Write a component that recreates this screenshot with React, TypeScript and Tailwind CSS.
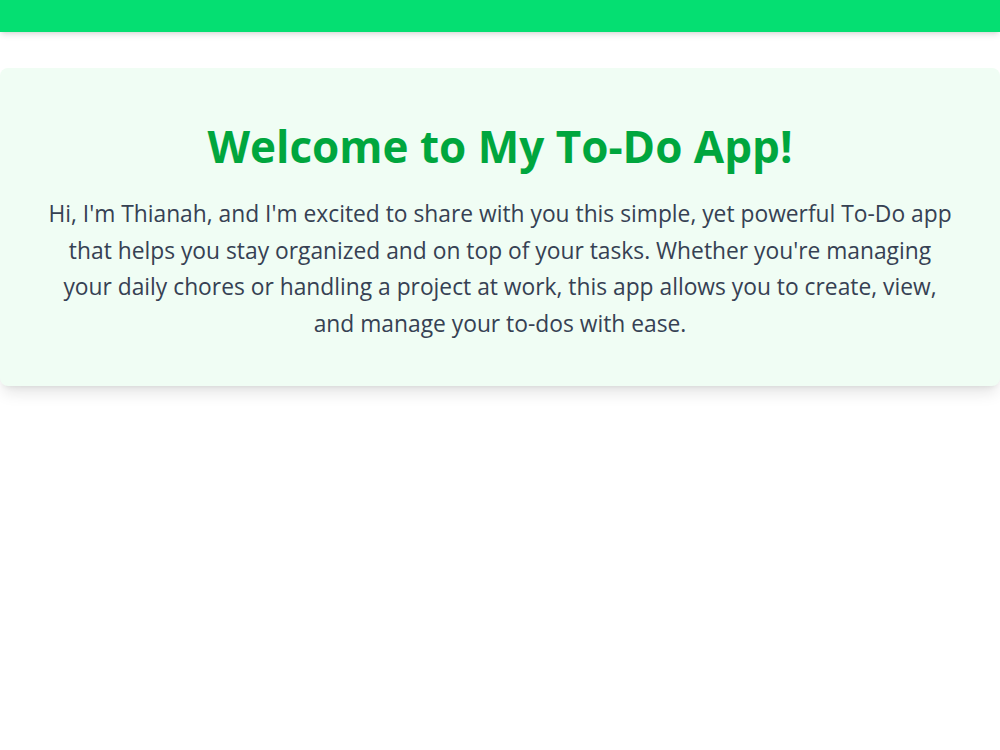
export default function App() {
  return (
    <div className="min-h-screen bg-white" style={{ fontFamily: '"Open Sans", "Noto Sans", sans-serif' }}>
      <header className="h-8 bg-green-400 shadow-md" />
      <main className="mt-9">
        <section className="rounded-lg bg-green-50 px-[46px] pt-14 pb-11 text-center shadow-lg">
          <h1 className="text-[44px] leading-none font-bold text-green-600">Welcome to My To-Do App!</h1>
          <p className="mt-7 text-[22.8px] leading-[36.5px] text-gray-700">
            Hi, I'm Thianah, and I'm excited to share with you this simple, yet powerful To-Do app that helps you stay organized and on top of your tasks. Whether you're managing your daily chores or handling a project at work, this app allows you to create, view, and manage your to-dos with ease.
          </p>
        </section>
      </main>
    </div>
  );
}
